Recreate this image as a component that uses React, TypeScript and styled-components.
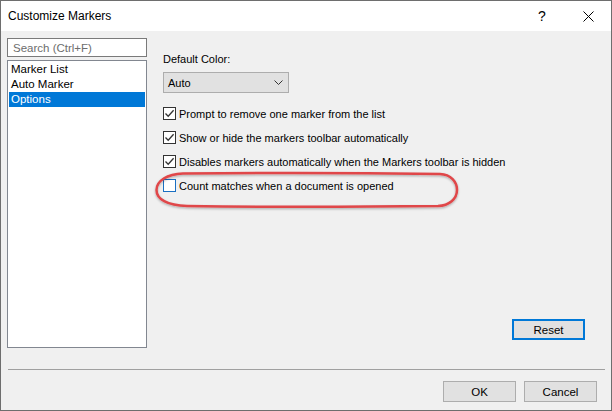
import React from "react";
import styled, { createGlobalStyle } from "styled-components";

const Global = createGlobalStyle`
  html, body { margin: 0; padding: 0; background: #ffffff; }
  body { font-family: "Liberation Sans", Arial, sans-serif; font-size: 11px; color: #000; }
  * { box-sizing: border-box; }
`;

const Window = styled.div`
  width: 612px;
  height: 411px;
  border: 1px solid #6e6e6e;
  display: flex;
  flex-direction: column;
  background: #f0f0f0;
`;

const TitleBar = styled.div`
  height: 30px;
  background: #ffffff;
  display: flex;
  align-items: center;
  padding-left: 7px;
  flex-shrink: 0;
`;

const Title = styled.div`
  flex: 1;
  font-size: 12px;
  color: #000;
`;

const TitleButton = styled.div`
  width: 46px;
  height: 30px;
  display: flex;
  align-items: center;
  justify-content: center;
  font-size: 14px;
  color: #000;
`;

const Body = styled.div`
  flex: 1;
  display: flex;
  flex-direction: column;
  padding: 7px 6px 8px 6px;
`;

const MainRow = styled.div`
  display: flex;
  height: 310px;
`;

const Sidebar = styled.div`
  width: 140px;
  display: flex;
  flex-direction: column;
  gap: 3px;
`;

const SearchBox = styled.div`
  height: 19px;
  border: 1px solid #7a7a7a;
  background: #fff;
  color: #6d6d6d;
  display: flex;
  align-items: center;
  padding-left: 5px;
  font-size: 11.5px;
`;

const ListBox = styled.div`
  flex: 1;
  border: 1px solid #828790;
  background: #fff;
  padding: 1px;
  display: flex;
  flex-direction: column;
  font-size: 11.5px;
`;

const ListItem = styled.div<{ $selected?: boolean }>`
  height: 15px;
  line-height: 15px;
  padding-left: 2px;
  background: ${(p) => (p.$selected ? "#0078d7" : "transparent")};
  color: ${(p) => (p.$selected ? "#ffffff" : "#000000")};
`;

const Content = styled.div`
  flex: 1;
  display: flex;
  flex-direction: column;
  padding-left: 16px;
  padding-top: 13px;
  padding-bottom: 8px;
  padding-right: 20px;
`;

const Label = styled.div`
  height: 16px;
  line-height: 16px;
`;

const Select = styled.div`
  margin-top: 5px;
  width: 126px;
  height: 21px;
  border: 1px solid #adadad;
  background: #e1e1e1;
  display: flex;
  align-items: center;
  justify-content: space-between;
  padding: 0 5px 0 4px;
`;

const Checks = styled.div`
  margin-top: 14px;
  display: flex;
  flex-direction: column;
  gap: 11px;
`;

const CheckRow = styled.div`
  position: relative;
  display: flex;
  align-items: center;
  height: 13px;
  gap: 3px;
`;

const Box = styled.div<{ $focus?: boolean }>`
  width: 13px;
  height: 13px;
  border: 1px solid ${(p) => (p.$focus ? "#1a6fc2" : "#333333")};
  background: #fff;
  flex-shrink: 0;
  display: flex;
  align-items: center;
  justify-content: center;
`;

const Ellipse = styled.svg`
  position: absolute;
  left: -8px;
  top: -7px;
  overflow: visible;
  pointer-events: none;
`;

const ResetRow = styled.div`
  margin-top: auto;
  display: flex;
  justify-content: flex-end;
`;

const Button = styled.div<{ $default?: boolean }>`
  width: 73px;
  height: 21px;
  border: ${(p) => (p.$default ? "2px solid #0078d7" : "1px solid #adadad")};
  background: #e1e1e1;
  display: flex;
  align-items: center;
  justify-content: center;
  color: #000;
  font-size: 11.5px;
`;

const Separator = styled.div`
  margin-top: 21px;
  margin-left: 1px;
  height: 1px;
  background: #a0a0a0;
`;

const Footer = styled.div`
  margin-top: 11px;
  display: flex;
  justify-content: flex-end;
  gap: 8px;
  padding-right: 8px;
`;

const Check = () => (
  <svg width="11" height="11" viewBox="0 0 11 11">
    <path d="M1.5 5.5 L4.2 8.3 L9.6 2.2" fill="none" stroke="#333" strokeWidth="1.3" />
  </svg>
);

const CloseIcon = () => (
  <svg width="11" height="11" viewBox="0 0 11 11">
    <path d="M0.5 0.5 L10.5 10.5 M10.5 0.5 L0.5 10.5" stroke="#000" strokeWidth="1" />
  </svg>
);

const Chevron = () => (
  <svg width="9" height="5" viewBox="0 0 9 5">
    <path d="M0.5 0.5 L4.5 4.5 L8.5 0.5" fill="none" stroke="#333" strokeWidth="1" />
  </svg>
);

export default function App() {
  return (
    <>
      <Global />
      <Window>
        <TitleBar>
          <Title>Customize Markers</Title>
          <TitleButton>?</TitleButton>
          <TitleButton>
            <CloseIcon />
          </TitleButton>
        </TitleBar>
        <Body>
          <MainRow>
            <Sidebar>
              <SearchBox>Search (Ctrl+F)</SearchBox>
              <ListBox>
                <ListItem>Marker List</ListItem>
                <ListItem>Auto Marker</ListItem>
                <ListItem $selected>Options</ListItem>
              </ListBox>
            </Sidebar>
            <Content>
              <Label>Default Color:</Label>
              <Select>
                <span>Auto</span>
                <Chevron />
              </Select>
              <Checks>
                <CheckRow>
                  <Box>
                    <Check />
                  </Box>
                  Prompt to remove one marker from the list
                </CheckRow>
                <CheckRow>
                  <Box>
                    <Check />
                  </Box>
                  Show or hide the markers toolbar automatically
                </CheckRow>
                <CheckRow>
                  <Box>
                    <Check />
                  </Box>
                  Disables markers automatically when the Markers toolbar is hidden
                </CheckRow>
                <CheckRow>
                  <Box $focus />
                  Count matches when a document is opened
                  <Ellipse width="304" height="36" viewBox="0 0 304 36">
                    <defs>
                      <filter id="sh" x="-10%" y="-50%" width="120%" height="200%">
                        <feDropShadow dx="0" dy="1.2" stdDeviation="1" floodColor="#000" floodOpacity="0.3" />
                      </filter>
                    </defs>
                    <path
                      d="M28 1.5 C 120 0.5, 220 1, 285 2 C 296 2.5, 302 10, 302 18 C 302 27, 294 33.5, 283 34 C 200 35, 100 35, 32 34 C 12 33.5, 1.5 27, 1.5 18 C 1.5 9, 12 2, 28 1.5 Z"
                      fill="none"
                      stroke="#e0474a"
                      strokeWidth="2.5"
                      filter="url(#sh)"
                    />
                  </Ellipse>
                </CheckRow>
              </Checks>
              <ResetRow>
                <Button $default>Reset</Button>
              </ResetRow>
            </Content>
          </MainRow>
          <Separator />
          <Footer>
            <Button>OK</Button>
            <Button>Cancel</Button>
          </Footer>
        </Body>
      </Window>
    </>
  );
}
